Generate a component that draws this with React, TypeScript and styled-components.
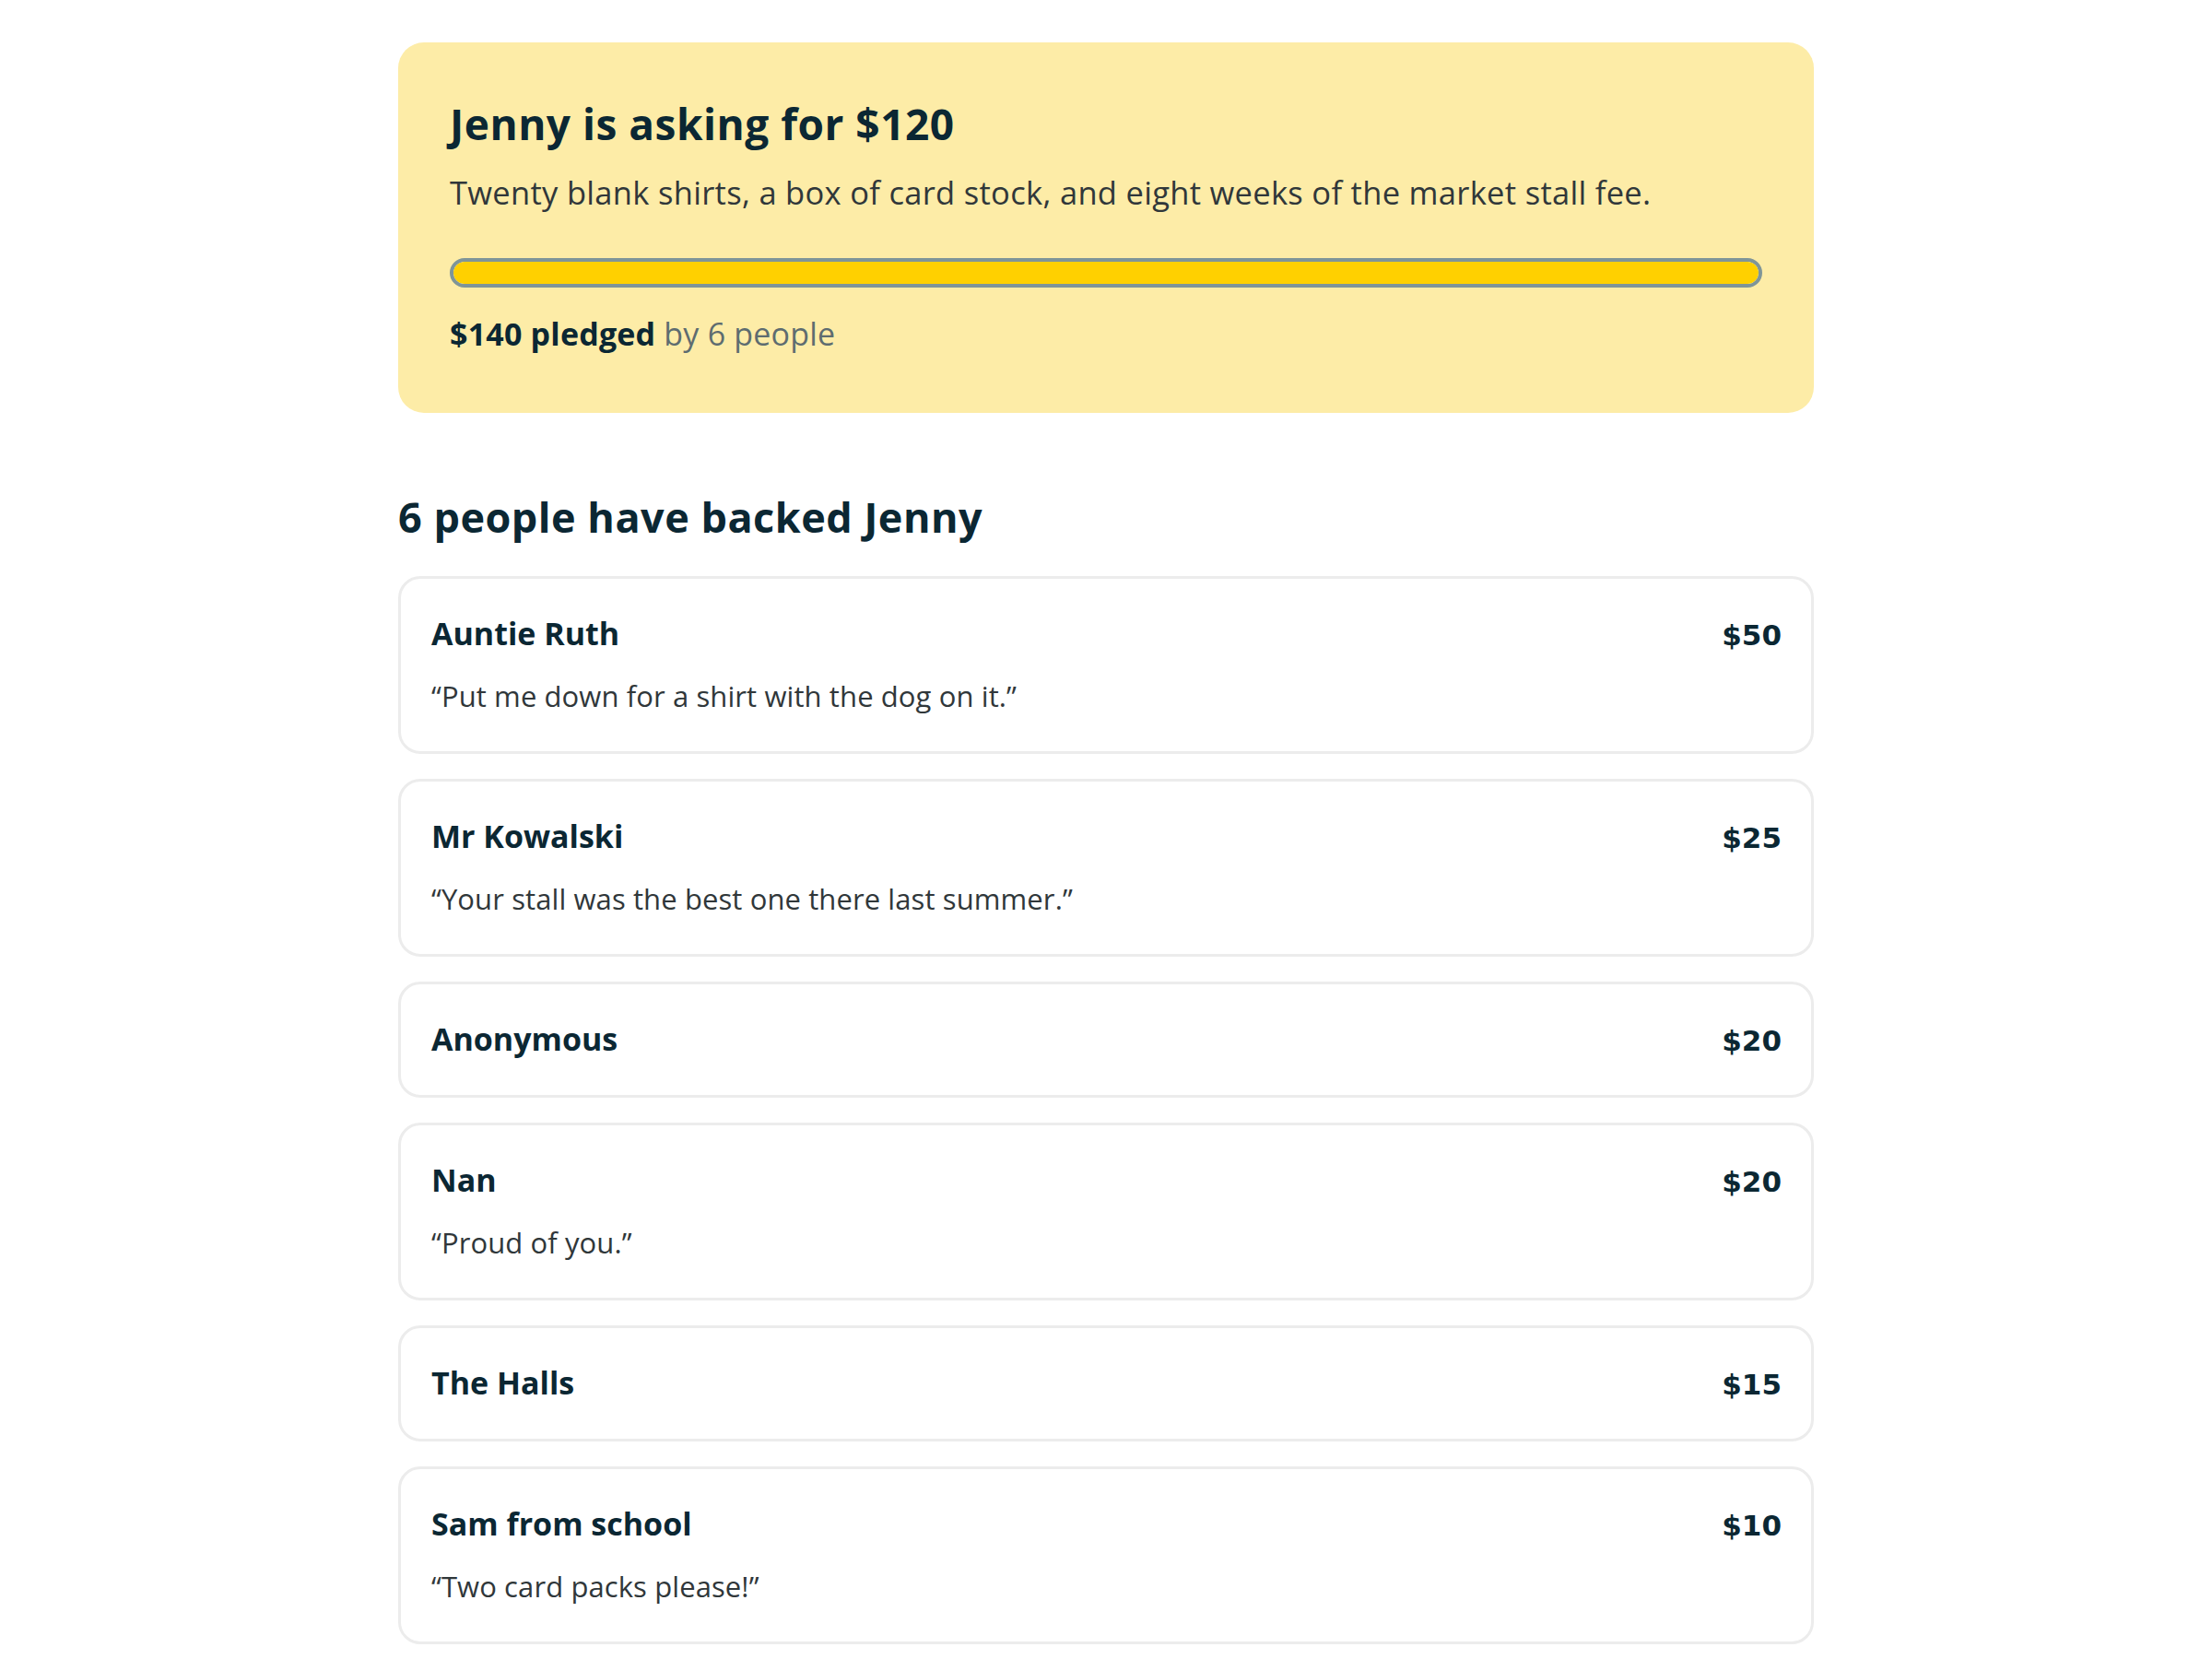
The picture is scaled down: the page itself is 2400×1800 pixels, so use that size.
import React from "react";
import styled, { createGlobalStyle } from "styled-components";

const GlobalStyle = createGlobalStyle`
  html, body {
    margin: 0;
    padding: 0;
    background: #ffffff;
  }
  body {
    font-family: "Open Sans", "Liberation Sans", Arial, sans-serif;
    color: #0b2733;
  }
  * { box-sizing: border-box; }
`;

const Page = styled.main`
  max-width: 1536px;
  margin: 0 auto;
  padding: 46px 0 17px;
`;

const Hero = styled.section`
  background: #fdeca7;
  border-radius: 28px;
  padding: 60px 56px 62px;
  display: flex;
  flex-direction: column;
`;

const Title = styled.h1`
  margin: 0;
  font-family: "Open Sans", "Liberation Sans", sans-serif;
  font-weight: 700;
  font-size: 46px;
  line-height: 56px;
  letter-spacing: 0.5px;
  color: #0b2733;
`;

const Description = styled.p`
  margin: 23px 0 0;
  font-family: "Open Sans", "Liberation Sans", sans-serif;
  font-weight: 400;
  font-size: 34.5px;
  line-height: 48px;
  letter-spacing: 0.3px;
  color: #30373a;
`;

const Track = styled.div`
  margin-top: 47px;
  height: 32px;
  border: 4px solid #7f9598;
  border-radius: 999px;
  background: #fdeca7;
  overflow: hidden;
`;

const Fill = styled.div`
  height: 100%;
  background: #ffd000;
  border-radius: 999px;
`;

const Pledged = styled.p`
  margin: 26px 0 0;
  font-family: "Open Sans", "Liberation Sans", sans-serif;
  font-size: 34px;
  line-height: 48px;
  letter-spacing: 0.2px;
  color: #5e6c70;
`;

const PledgedAmount = styled.strong`
  font-weight: 700;
  color: #0b2733;
`;

const SectionTitle = styled.h2`
  margin: 85px 0 36px;
  font-family: "Open Sans", "Liberation Sans", sans-serif;
  font-weight: 700;
  font-size: 45px;
  line-height: 56px;
  letter-spacing: 0.5px;
  color: #0b2733;
`;

const BackerList = styled.ul`
  list-style: none;
  margin: 0;
  padding: 0;
  display: flex;
  flex-direction: column;
  gap: 27px;
`;

const BackerCard = styled.li`
  border: 3px solid #ececec;
  border-radius: 24px;
  padding: 35px 32px 37px 33px;
  background: #ffffff;
  display: flex;
  flex-direction: column;
  gap: 22px;
`;

const BackerRow = styled.div`
  display: flex;
  justify-content: space-between;
  align-items: baseline;
`;

const BackerName = styled.span`
  font-family: "Open Sans", "Liberation Sans", sans-serif;
  font-weight: 700;
  font-size: 34px;
  line-height: 48px;
  color: #0b2733;
`;

const BackerAmount = styled.span`
  font-family: "DejaVu Sans", "Open Sans", sans-serif;
  font-weight: 700;
  font-size: 31px;
  line-height: 40px;
  color: #0b2733;
`;

const Quote = styled.p`
  margin: 0;
  font-family: "Open Sans", "Liberation Sans", sans-serif;
  font-weight: 400;
  font-size: 31px;
  line-height: 45px;
  letter-spacing: 0.1px;
  color: #30373a;
`;

type Backer = { name: string; amount: number; note?: string };

const backers: Backer[] = [
  { name: "Auntie Ruth", amount: 50, note: "Put me down for a shirt with the dog on it." },
  { name: "Mr Kowalski", amount: 25, note: "Your stall was the best one there last summer." },
  { name: "Anonymous", amount: 20 },
  { name: "Nan", amount: 20, note: "Proud of you." },
  { name: "The Halls", amount: 15 },
  { name: "Sam from school", amount: 10, note: "Two card packs please!" },
];

const goal = 120;
const pledged = backers.reduce((s, b) => s + b.amount, 0);

export default function App() {
  const pct = Math.min(100, (pledged / goal) * 100);
  return (
    <>
      <GlobalStyle />
      <Page>
        <Hero>
          <Title>Jenny is asking for ${goal}</Title>
          <Description>
            Twenty blank shirts, a box of card stock, and eight weeks of the market stall fee.
          </Description>
          <Track>
            <Fill style={{ width: `${pct}%` }} />
          </Track>
          <Pledged>
            <PledgedAmount>${pledged} pledged</PledgedAmount> by {backers.length} people
          </Pledged>
        </Hero>
        <SectionTitle>{backers.length} people have backed Jenny</SectionTitle>
        <BackerList>
          {backers.map((b) => (
            <BackerCard key={b.name}>
              <BackerRow>
                <BackerName>{b.name}</BackerName>
                <BackerAmount>${b.amount}</BackerAmount>
              </BackerRow>
              {b.note && <Quote>“{b.note}”</Quote>}
            </BackerCard>
          ))}
        </BackerList>
      </Page>
    </>
  );
}
